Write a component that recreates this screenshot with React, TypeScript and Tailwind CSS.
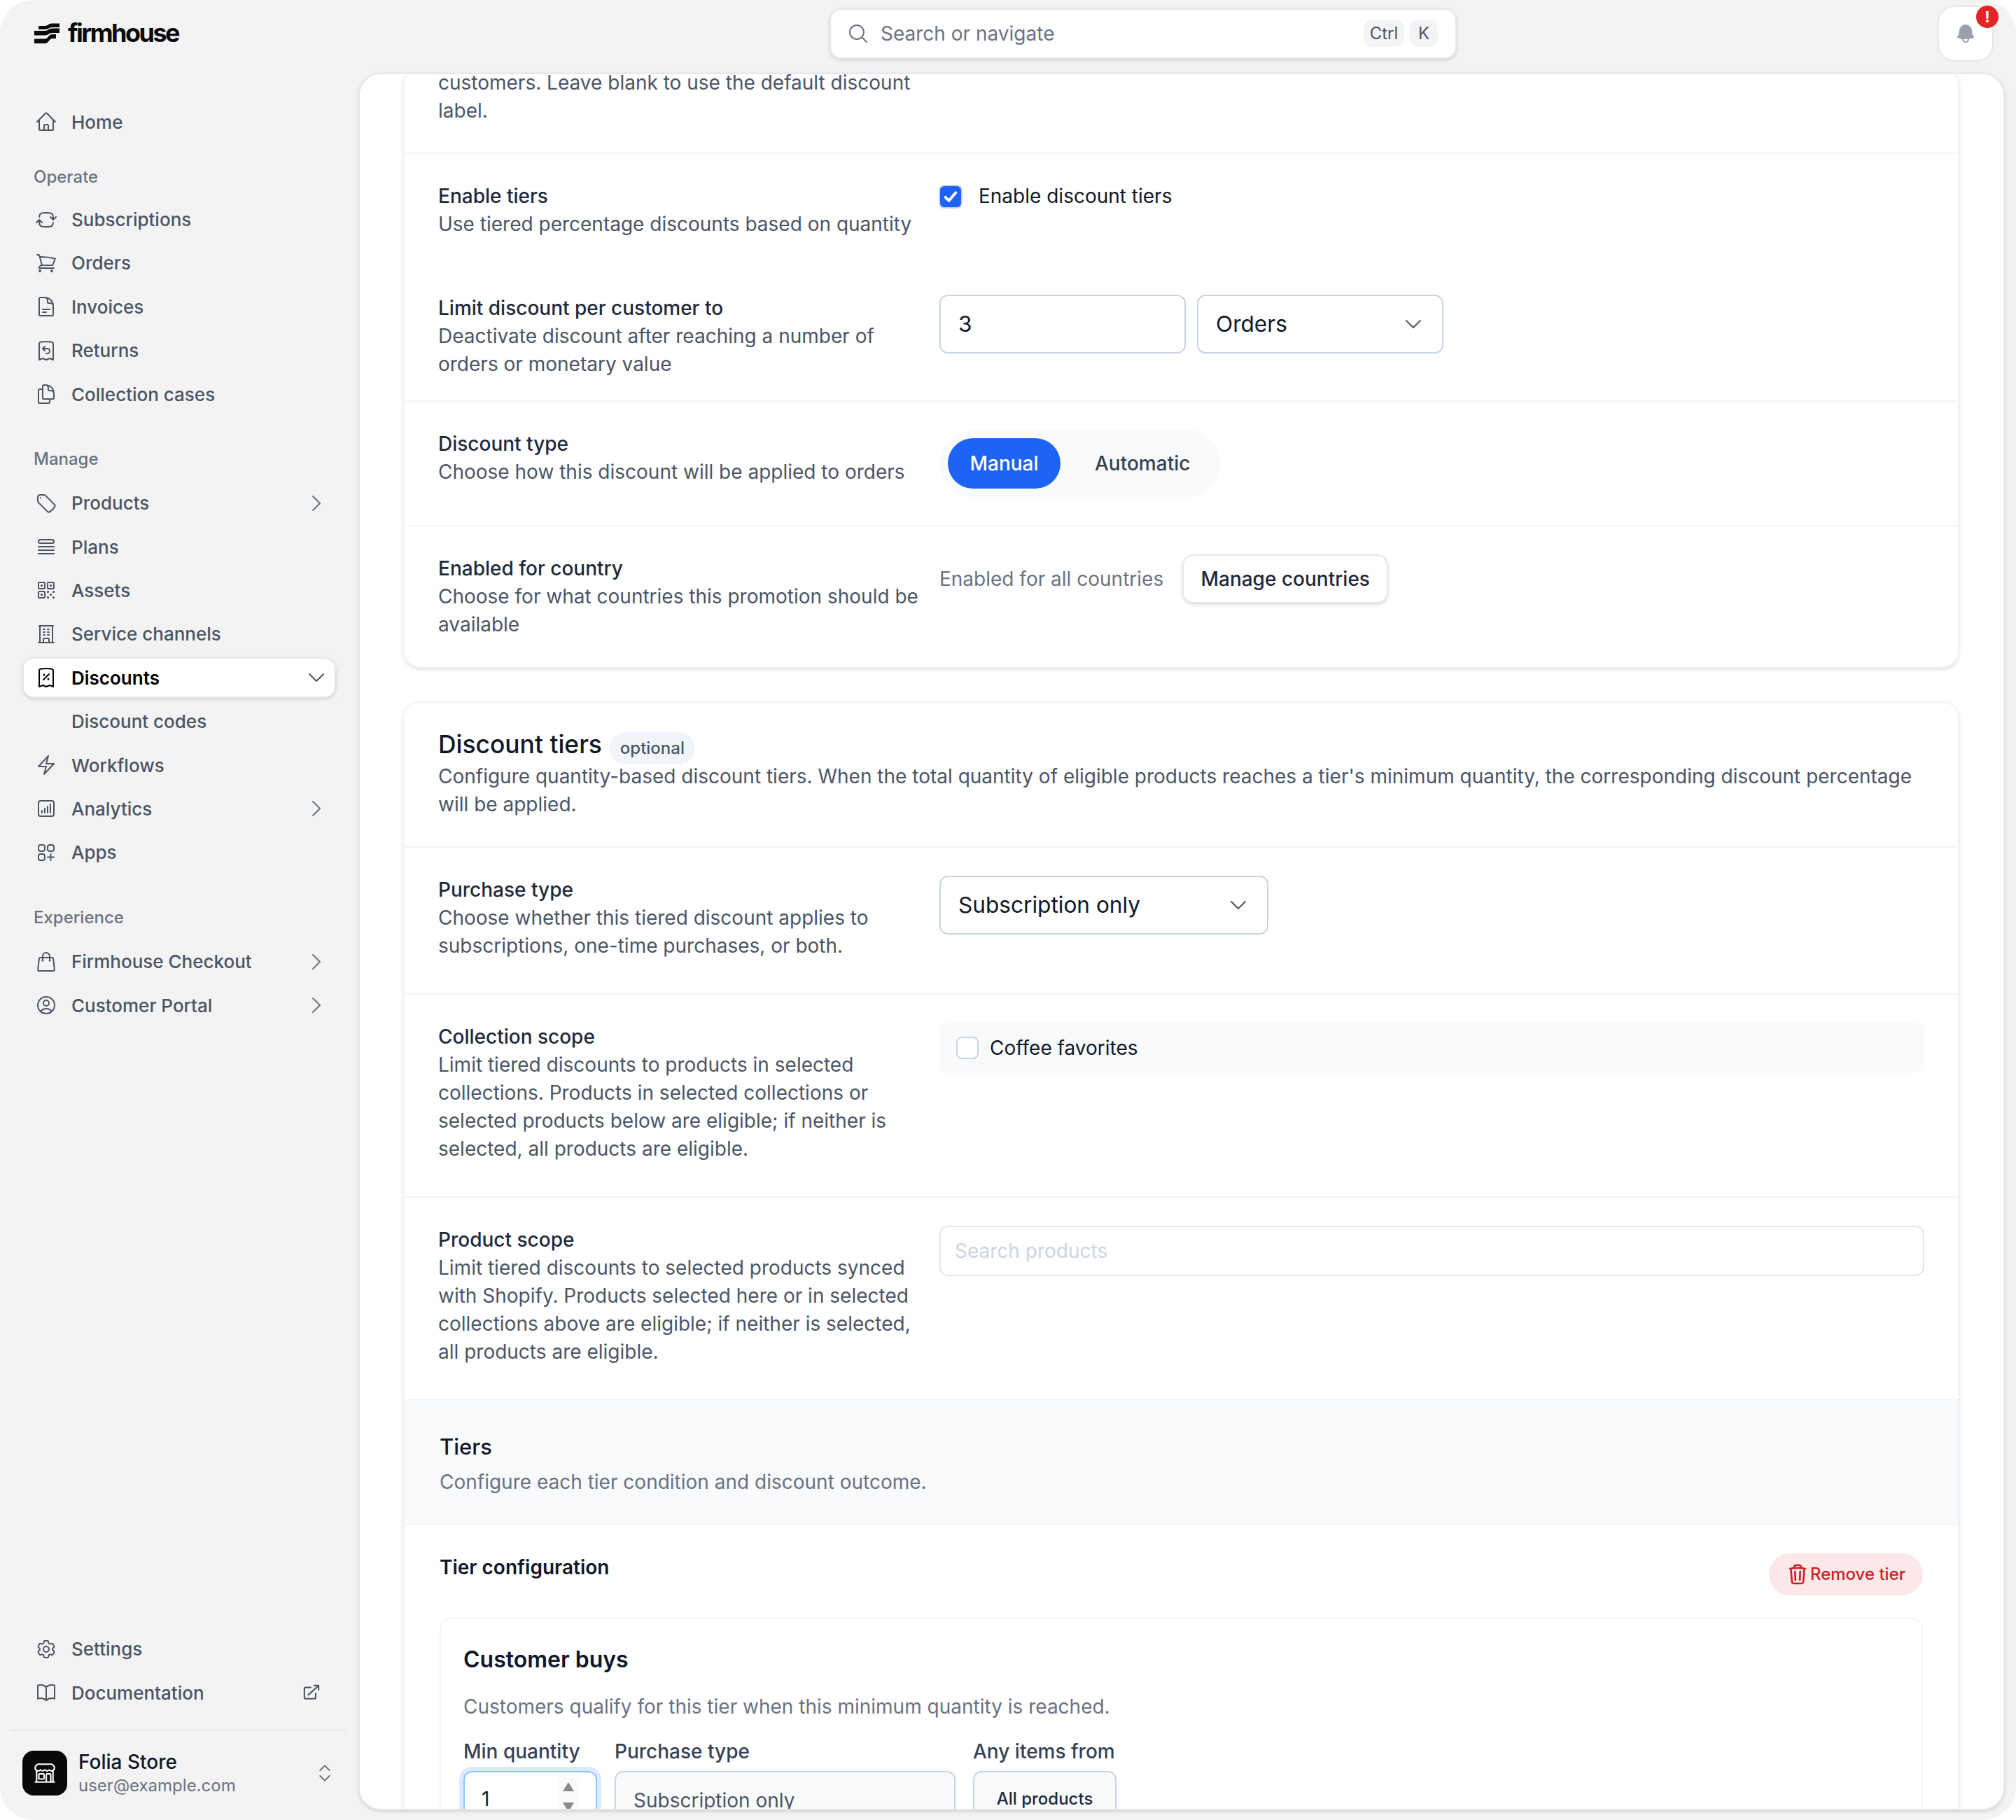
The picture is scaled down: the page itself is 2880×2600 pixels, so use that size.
import React from 'react';
import {
  HiOutlineHome, HiOutlineArrowPathRoundedSquare, HiOutlineShoppingCart, HiOutlineDocumentText,
  HiOutlineReceiptRefund, HiOutlineDocumentDuplicate, HiOutlineTag, HiOutlineQueueList, HiOutlineQrCode,
  HiOutlineBuildingOffice, HiOutlineReceiptPercent, HiOutlineBolt, HiOutlineChartBarSquare, HiOutlineSquaresPlus,
  HiOutlineShoppingBag, HiOutlineUserCircle, HiOutlineCog6Tooth, HiOutlineBookOpen, HiOutlineChevronRight,
  HiOutlineChevronDown, HiMiniArrowTopRightOnSquare, HiOutlineBuildingStorefront, HiOutlineMagnifyingGlass,
  HiBell, HiOutlineTrash,
} from 'react-icons/hi2';
import { ChevronsUpDown } from 'lucide-react';

type Item = { label: string; icon?: React.ComponentType<{ className?: string }>; chevron?: boolean; active?: boolean; ext?: boolean };

const NavRow = ({ label, icon: Icon, chevron, active, ext }: Item) => (
  <div
    className={
      active
        ? 'flex h-[29.2px] items-center gap-2.5 rounded-lg border border-gray-200 bg-white pr-[5px] pl-2 text-[13px] font-semibold text-black shadow-sm'
        : 'flex h-[29.2px] items-center gap-2.5 rounded-lg border border-transparent pr-[5px] pl-2 text-[13px] font-medium text-gray-600'
    }
  >
    {Icon ? <Icon className={active ? 'size-4 shrink-0 text-black' : 'size-4 shrink-0 text-gray-600'} /> : <span className="size-4 shrink-0" />}
    <span className="flex-1 truncate">{label}</span>
    {chevron && !active && <HiOutlineChevronRight className="size-4 shrink-0 text-gray-500" />}
    {chevron && active && <HiOutlineChevronDown className="size-4 shrink-0 text-gray-600" />}
    {ext && <HiMiniArrowTopRightOnSquare className="mr-[4.5px] size-3.5 shrink-0 text-gray-600" />}
  </div>
);

const NavList = ({ items }: { items: Item[] }) => (
  <div className="flex flex-col gap-[2px]">
    {items.map((i) => (
      <NavRow key={i.label} {...i} />
    ))}
  </div>
);

const NavLabel = ({ children, className }: { children: React.ReactNode; className: string }) => (
  <div className={`pl-2 text-xs leading-4 font-medium text-gray-500 ${className}`}>{children}</div>
);

const FieldText = ({ title, children }: { title: string; children: React.ReactNode }) => (
  <div className="w-[358px] shrink-0 pr-[14px] text-sm">
    <div className="font-medium text-gray-800">{title}</div>
    <div className="text-gray-600">{children}</div>
  </div>
);

const Select = ({ label, className }: { label: string; className: string }) => (
  <div className={`flex h-[42px] items-center justify-between rounded-md border border-slate-300 bg-white px-[12.5px] text-[15.8px] text-gray-900 ${className}`}>
    <span>{label}</span>
    <HiOutlineChevronDown className="size-4 text-gray-600" />
  </div>
);

const Logo = () => (
  <svg viewBox="0 0 36 29" className="h-[14.5px] w-[18px] shrink-0" fill="#0a0a0a">
    <path d="M6 4H15C20 4 20 0.5 25 0.5H36V6H26C21 6 21 9 15 9H6Z" />
    <path d="M0 11H15C20 11 21 7.5 26 7.5H36V14H26C21 14 20 17.5 15 17.5H0Z" />
    <path d="M0 22.5H15C20 22.5 20 16 26 16H31V22H26C21 22 21 29 15 29H0Z" />
  </svg>
);

export default function App() {
  return (
    <div className="h-[1300px] w-[1440px] overflow-hidden bg-white font-[Inter,sans-serif] antialiased [zoom:2]">
      <div className="flex h-full rounded-3xl bg-[#f3f3f3]">
        {/* Sidebar */}
        <aside className="flex h-full w-[256px] shrink-0 flex-col">
          <div className="flex h-[72.6px] shrink-0 items-start gap-[6px] pt-[16.5px] pl-[24.5px]">
            <Logo />
            <span className="text-[18px] leading-[14.5px] font-bold tracking-[-0.07em] text-[#0a0a0a]">firmhouse</span>
          </div>
          <nav className="flex flex-1 flex-col pr-4 pl-4">
            <NavList items={[{ label: 'Home', icon: HiOutlineHome }]} />
            <NavLabel className="mt-[16.6px] mb-[7.8px]">Operate</NavLabel>
            <NavList
              items={[
                { label: 'Subscriptions', icon: HiOutlineArrowPathRoundedSquare },
                { label: 'Orders', icon: HiOutlineShoppingCart },
                { label: 'Invoices', icon: HiOutlineDocumentText },
                { label: 'Returns', icon: HiOutlineReceiptRefund },
                { label: 'Collection cases', icon: HiOutlineDocumentDuplicate },
              ]}
            />
            <NavLabel className="mt-[23.6px] mb-[9px]">Manage</NavLabel>
            <NavList
              items={[
                { label: 'Products', icon: HiOutlineTag, chevron: true },
                { label: 'Plans', icon: HiOutlineQueueList },
                { label: 'Assets', icon: HiOutlineQrCode },
                { label: 'Service channels', icon: HiOutlineBuildingOffice },
                { label: 'Discounts', icon: HiOutlineReceiptPercent, chevron: true, active: true },
                { label: 'Discount codes' },
                { label: 'Workflows', icon: HiOutlineBolt },
                { label: 'Analytics', icon: HiOutlineChartBarSquare, chevron: true },
                { label: 'Apps', icon: HiOutlineSquaresPlus },
              ]}
            />
            <NavLabel className="mt-[24.2px] mb-[8.6px]">Experience</NavLabel>
            <NavList
              items={[
                { label: 'Firmhouse Checkout', icon: HiOutlineShoppingBag, chevron: true },
                { label: 'Customer Portal', icon: HiOutlineUserCircle, chevron: true },
              ]}
            />
            <div className="mt-auto">
              <NavList
                items={[
                  { label: 'Settings', icon: HiOutlineCog6Tooth },
                  { label: 'Documentation', icon: HiOutlineBookOpen, ext: true },
                ]}
              />
            </div>
          </nav>
          <div className="mx-2 mt-[11.8px] flex h-[64.5px] w-[240px] shrink-0 items-start gap-2 border-t border-gray-200 pt-[14px] pl-2">
            <div className="flex size-8 shrink-0 items-center justify-center rounded-lg bg-[#09090b]">
              <HiOutlineBuildingStorefront className="size-[17px] text-white" />
            </div>
            <div className="flex-1">
              <div className="text-sm leading-4 font-medium text-gray-900">Folia Store</div>
              <div className="mt-px text-xs leading-4 text-gray-500">user@example.com</div>
            </div>
            <ChevronsUpDown className="mt-2 mr-2 size-4 text-gray-500" strokeWidth={1.5} />
          </div>
        </aside>

        {/* Right column */}
        <div className="flex min-w-0 flex-1 flex-col pr-2 pb-[7px]">
          <header className="relative flex h-[52px] shrink-0 items-start">
            <div className="mt-[5.75px] ml-[336.5px] flex h-9 w-[448px] items-center gap-2 rounded-lg border border-gray-200 bg-white pr-[12.5px] pl-[11.5px] shadow-sm">
              <HiOutlineMagnifyingGlass className="size-4 text-gray-500" />
              <span className="flex-1 text-sm text-gray-500">Search or navigate</span>
              <span className="flex h-[19.5px] w-[29px] items-center justify-center rounded-md bg-gray-100 text-xs text-gray-600">Ctrl</span>
              <span className="-ml-1 flex h-[19.5px] w-5 items-center justify-center rounded-md bg-gray-100 text-xs text-gray-600">K</span>
            </div>
            <div className="relative mt-1 mr-[8px] ml-auto flex size-10 items-center justify-center rounded-xl border border-gray-200 bg-white">
              <HiBell className="size-4 text-gray-400" />
              <span className="absolute top-[-1px] right-[-4.5px] flex size-4 items-center justify-center rounded-full bg-[#e32528] text-[11px] leading-none font-bold text-white">!</span>
            </div>
          </header>

          <main className="min-h-0 flex-1 overflow-hidden rounded-2xl border border-gray-200 bg-white pr-[31.5px] pl-[31px] shadow-sm">
            {/* First card, scrolled */}
            <section className="-mt-[4.2px] rounded-xl border border-t-0 border-slate-100 shadow-sm">
              <div className="border-b border-slate-100 px-6 pb-[20px]">
                <div className="w-[344px] text-sm text-gray-600">customers. Leave blank to use the default discount label.</div>
              </div>
              <div className="flex items-start px-6 pt-5">
                <FieldText title="Enable tiers">Use tiered percentage discounts based on quantity</FieldText>
                <label className="flex items-start gap-[12.5px] text-sm text-gray-900">
                  <span className="mt-[3px] ml-[0.5px] flex size-[15px] items-center justify-center rounded-[3px] bg-[#1d64f4] ring-1 ring-slate-300">
                    <svg viewBox="0 0 16 16" className="size-[13px]" fill="none" stroke="#fff" strokeWidth={2.4} strokeLinecap="round" strokeLinejoin="round"><path d="M3.5 8.5 6.5 11.5 12.5 4.5" /></svg>
                  </span>
                  Enable discount tiers
                </label>
              </div>
              <div className="flex items-start border-b border-slate-100 px-6 pt-[40px] pb-[16px]">
                <FieldText title="Limit discount per customer to">Deactivate discount after reaching a number of orders or monetary value</FieldText>
                <div className="mt-[0.5px] flex gap-2">
                  <div className="flex h-[42px] w-[176px] items-center rounded-md border border-slate-300 pl-[12.5px] text-[15.8px] text-gray-900">3</div>
                  <Select label="Orders" className="w-[176px]" />
                </div>
              </div>
              <div className="flex items-start border-b border-slate-100 px-6 py-5">
                <FieldText title="Discount type">Choose how this discount will be applied to orders</FieldText>
                <div className="flex h-12 w-[201px] items-center gap-[10px] rounded-full bg-slate-50 pl-[6px] text-sm font-medium">
                  <span className="flex h-9 w-[80.5px] items-center justify-center rounded-full bg-[#1d64f4] text-white">Manual</span>
                  <span className="ml-[14.5px] text-gray-700">Automatic</span>
                </div>
              </div>
              <div className="flex items-start px-6 py-5">
                <FieldText title="Enabled for country">Choose for what countries this promotion should be available</FieldText>
                <div className="flex items-center gap-[13.5px] text-sm">
                  <span className="text-gray-500">Enabled for all countries</span>
                  <span className="flex h-[35px] w-[147px] items-center justify-center rounded-lg border border-slate-200 bg-white font-medium text-gray-800 shadow-sm">Manage countries</span>
                </div>
              </div>
            </section>

            {/* Discount tiers card */}
            <section className="mt-6 rounded-xl border border-slate-100 shadow-sm">
              <div className="border-b border-slate-100 px-6 pt-4 pb-5">
                <div className="flex h-7 items-center gap-[5.5px]">
                  <h2 className="text-[17.7px] font-medium text-gray-900">Discount tiers</h2>
                  <span className="mt-[5px] flex h-[23px] w-[61px] items-center justify-center rounded-full bg-slate-100 text-xs font-medium text-gray-600">optional</span>
                </div>
                <p className="-mt-[1.5px] text-sm text-gray-600">Configure quantity-based discount tiers. When the total quantity of eligible products reaches a tier's minimum quantity, the corresponding discount percentage will be applied.</p>
              </div>
              <div className="flex items-start border-b border-slate-100 px-6 pt-5 pb-6">
                <FieldText title="Purchase type">Choose whether this tiered discount applies to subscriptions, one-time purchases, or both.</FieldText>
                <Select label="Subscription only" className="w-[235px]" />
              </div>
              <div className="flex items-start border-b border-slate-100 px-6 pt-5 pb-6">
                <FieldText title="Collection scope">Limit tiered discounts to products in selected collections. Products in selected collections or selected products below are eligible; if neither is selected, all products are eligible.</FieldText>
                <div className="flex h-9 flex-1 items-center gap-[8px] rounded-md bg-slate-50 pl-3 text-sm text-gray-900">
                  <span className="size-4 rounded-[4px] border border-slate-300 bg-white" />
                  Coffee favorites
                </div>
              </div>
              <div className="flex items-start px-6 pt-5 pb-6">
                <FieldText title="Product scope">Limit tiered discounts to selected products synced with Shopify. Products selected here or in selected collections above are eligible; if neither is selected, all products are eligible.</FieldText>
                <div className="flex h-9 flex-1 items-center rounded-md border border-slate-200 bg-white pl-[10px] text-sm text-slate-300">Search products</div>
              </div>

              <div className="border-y border-slate-100 bg-slate-50 px-[25px] pt-[21px] pb-5">
                <h3 className="text-[15.5px] leading-6 font-medium text-gray-900">Tiers</h3>
                <p className="mt-[3px] text-sm text-gray-500">Configure each tier condition and discount outcome.</p>
              </div>

              <div className="px-[25px] pt-5">
                <div className="flex items-start justify-between">
                  <h4 className="text-sm font-semibold text-gray-900">Tier configuration</h4>
                  <span className="flex h-[30px] w-[110px] items-center justify-center gap-[1px] rounded-full bg-[#fce8e8] text-xs font-medium text-[#d01f25]">
                    <HiOutlineTrash className="size-4" strokeWidth={2} />
                    Remove tier
                  </span>
                </div>
                <div className="mt-4 rounded-lg border border-slate-100 px-4 pt-[17px]">
                  <h5 className="text-base font-semibold text-gray-900">Customer buys</h5>
                  <p className="mt-[11.5px] text-sm text-gray-500">Customers qualify for this tier when this minimum quantity is reached.</p>
                  <div className="mt-3 flex gap-[12.5px] text-sm font-medium text-gray-700">
                    <div className="w-[95.5px] shrink-0">
                      <div>Min quantity</div>
                      <div className="relative mt-1 h-12 rounded-md border border-blue-300 pt-[9px] pl-[12px] text-sm font-normal text-gray-900 ring-[3px] ring-blue-100">
                        1
                        <div className="absolute top-[4px] right-[12px] flex h-[27px] w-[15px] flex-col items-center justify-between bg-gray-50 py-[3px]">
                          <svg viewBox="0 0 10 8" className="h-[6.5px] w-[9px]" fill="#8a8a8a"><path d="M5 0 10 8H0Z" /></svg>
                          <svg viewBox="0 0 10 8" className="h-[6.5px] w-[9px]" fill="#8a8a8a"><path d="M0 0H10L5 8Z" /></svg>
                        </div>
                      </div>
                    </div>
                    <div className="w-[243.5px] shrink-0">
                      <div>Purchase type</div>
                      <div className="mt-1 h-12 rounded-md border border-slate-300 bg-slate-50 pt-[10px] pl-[12.5px] text-sm font-normal text-gray-600">Subscription only</div>
                    </div>
                    <div className="w-[102.5px] shrink-0">
                      <div>Any items from</div>
                      <div className="mt-1 h-12 rounded-md border border-slate-300 bg-slate-50 pt-[11px] text-center text-xs font-medium text-gray-800">All products</div>
                    </div>
                  </div>
                </div>
              </div>
            </section>
          </main>
        </div>
      </div>
    </div>
  );
}
